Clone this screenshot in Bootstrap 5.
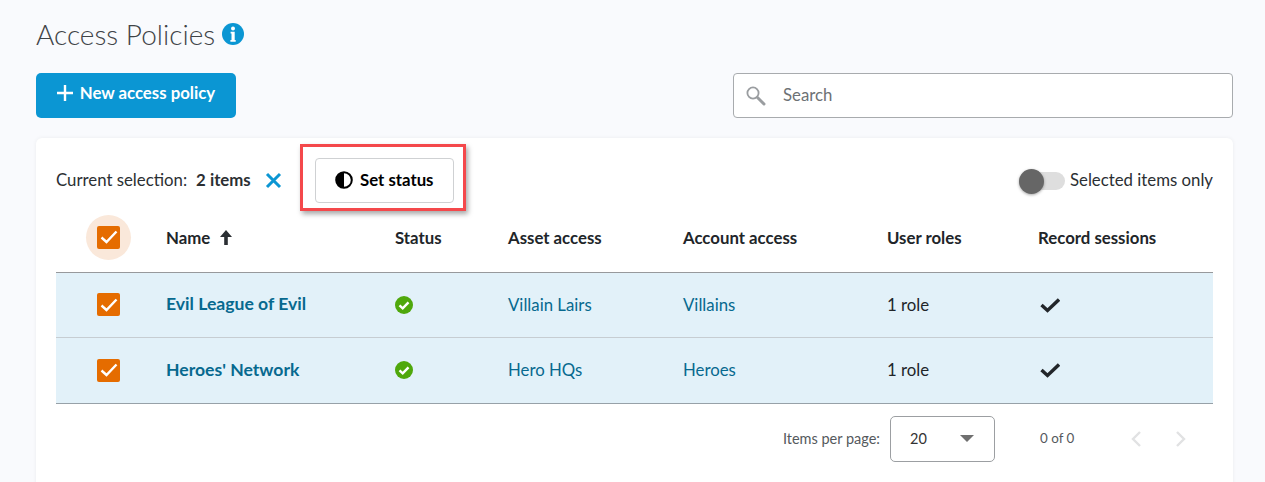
<!DOCTYPE html>
<html lang="en">
<head>
  <meta charset="UTF-8">
  <meta name="viewport" content="width=device-width, initial-scale=1">
  <title>Access Policies</title>
  <link href="https://cdn.jsdelivr.net/npm/bootstrap@5.3.0/dist/css/bootstrap.min.css" rel="stylesheet">
  <style>
    html, body { height: 482px; overflow: hidden; }
    body { background: #f9fafd; font-family: "Lato", "Liberation Sans", sans-serif; font-size: 16.8px; color: #2b2f33; padding: 0 32px 0 36px; }
    .page-title { font-size: 28px; font-weight: 300; color: #3f4347; line-height: 36px; margin: 0; padding-top: 16px; gap: 7px; }
    .title-row { height: 73px; }
    .new-btn { background: #0b96d3; color: #fff; border: 0; height: 45px; width: 200px; border-radius: 5px; font-weight: 700; font-size: 16.8px; padding: 0 0 6px; gap: 7px; }
    .new-btn:hover { background: #0b96d3; color: #fff; }
    .search-box { width: 500px; height: 45px; background: #fff; border: 1px solid #a8abae; border-radius: 4px; padding-left: 11px; gap: 16px; }
    .search-box input { border: 0; outline: 0; background: transparent; flex: 1; font-size: 16.8px; color: #333; padding: 0 0 2px; }
    .search-box input::placeholder { color: #6d7175; opacity: 1; }
    .panel-box { margin-top: 20px; background: #fff; border-radius: 6px; height: 400px; padding: 0 20px; box-shadow: 0 0 4px rgba(0,0,0,.06); }
    .sel-bar { height: 65px; padding-top: 20px; }
    .sel-label { padding-bottom: 2px; }
    .sel-count { margin-left: 9px; }
    .sel-clear { margin-left: 14px; }
    .status-wrap { margin-left: 33px; }
    .status-btn { width: 139px; height: 45px; background: #fff; border: 1px solid #cfd1d3; border-radius: 4px; font-weight: 700; color: #000; font-size: 16.8px; gap: 7px; padding: 0 0 2px; }
    .red-mark { position: absolute; left: -15px; top: -14px; width: 166px; height: 67px; border: 3px solid #f4484b; box-shadow: 2px 3px 5px rgba(0,0,0,.35); pointer-events: none; }
    .tog-row { gap: 5px; }
    .tog-track { display: block; position: relative; width: 46px; height: 18px; background: #dedede; border-radius: 9px; }
    .tog-knob { position: absolute; left: 0; top: -3px; width: 25px; height: 25px; border-radius: 50%; background: #666; box-shadow: 0 1px 3px rgba(0,0,0,.35); }
    .policy-table { table-layout: fixed; width: 1157px; margin: 0; }
    .policy-table th, .policy-table td { padding: 0; vertical-align: middle; border: 0; background: transparent; color: inherit; }
    .policy-table thead tr { height: 69px; }
    .policy-table thead th { font-weight: 700; border-bottom: 1px solid #97999c; }
    .policy-table tbody tr { height: 65px; }
    .policy-table tbody td { background: #e2f1f9; border-bottom: 1px solid #c6cdd2; }
    .policy-table tbody tr:last-child { height: 66px; }
    .policy-table tbody tr:last-child td { border-bottom-color: #97a1a8; }
    .w-a { width: 110px; } .w-b { width: 229px; } .w-c { width: 113px; } .w-d { width: 175px; } .w-e { width: 204px; } .w-f { width: 151px; }
    .cell-link { color: #07698f; text-decoration: none; }
    .name-link { color: #07698f; text-decoration: none; font-weight: 700; font-size: 17.6px; }
    .chk { width: 23px; height: 23px; background: #e56c00; border-radius: 2px; margin-left: 41px; }
    .halo { width: 45px; height: 45px; border-radius: 50%; background: #fae8da; margin-left: 30px; }
    .halo .chk { margin: 0; }
    .sort-arrow { margin-left: 5px; vertical-align: -1px; }
    .pager-row { height: 70px; font-size: 14.5px; color: #55595d; padding-right: 26px; }
    .page-select { width: 105px; height: 46px; border: 1px solid #9c9fa2; border-radius: 5px; padding: 0 20px 0 19px; margin-left: 10px; margin-right: 45px; color: #333; }
    .caret-down { width: 0; height: 0; border-left: 7px solid transparent; border-right: 7px solid transparent; border-top: 7px solid #6f6f6f; }
    .range-txt { width: 90px; font-size: 13.4px; }
    .next-arrow { margin-left: 33px; }
  </style>
</head>
<body>
  <!-- Title -->
  <div class="title-row">
    <h1 class="page-title d-flex align-items-center">Access Policies
      <svg width="22" height="22" viewBox="0 0 22 22"><circle cx="11" cy="11" r="11" fill="#0b96d3"/><circle cx="11" cy="5.400" r="2" fill="#fff"/><path d="M8.600 8.800h4.100v8.200h1v1.800H8.400V17h1.100v-6.400H8.600z" fill="#fff"/></svg>
    </h1>
  </div>

  <!-- Toolbar -->
  <div class="d-flex justify-content-between">
    <button class="btn new-btn d-flex align-items-center justify-content-center" type="button">
      <svg width="16" height="16" viewBox="0 0 16 16"><path d="M8 0v16M0 8h16" stroke="#fff" stroke-width="2.400"/></svg>
      New access policy
    </button>
    <div class="search-box d-flex align-items-center">
      <svg width="22" height="22" viewBox="0 0 22 22"><circle cx="8" cy="8" r="5.600" fill="none" stroke="#9a9da0" stroke-width="1.800"/><path d="M12.500 12.500l6.500 6.500" stroke="#9a9da0" stroke-width="3" stroke-linecap="round"/></svg>
      <input type="text" placeholder="Search">
    </div>
  </div>

  <!-- Policies -->
  <div class="panel-box">
    <div class="sel-bar d-flex align-items-center justify-content-between">
      <div class="d-flex align-items-center">
        <span class="sel-label">Current selection:</span>
        <strong class="sel-count sel-label">2 items</strong>
        <svg class="sel-clear" width="17" height="17" viewBox="0 0 17 17"><path d="M2 2l13 13M15 2L2 15" stroke="#0b96d3" stroke-width="3"/></svg>
        <div class="status-wrap position-relative">
          <button class="btn status-btn d-flex align-items-center justify-content-center" type="button">
            <svg width="18" height="18" viewBox="0 0 18 18"><circle cx="9" cy="9" r="7.800" fill="#fff" stroke="#000" stroke-width="2"/><path d="M9 1.500a7.500 7.500 0 0 0 0 15z" fill="#000"/></svg>
            Set status
          </button>
          <div class="red-mark"></div>
        </div>
      </div>
      <div class="tog-row d-flex align-items-center">
        <span class="tog-track"><span class="tog-knob"></span></span>
        <span class="sel-label">Selected items only</span>
      </div>
    </div>

    <table class="table policy-table">
      <thead>
        <tr>
          <th class="w-a"><div class="halo d-flex align-items-center justify-content-center"><div class="chk d-flex align-items-center justify-content-center"><svg width="18" height="14" viewBox="0 0 18 14"><path d="M1.500 7.500l5 4.500 10-10.500" fill="none" stroke="#fff" stroke-width="2.400"/></svg></div></div></th>
          <th class="w-b">Name <svg class="sort-arrow" width="14" height="15" viewBox="0 0 14 15"><path d="M7 0L1 7h4.200v8h3.600V7H13z" fill="#2b2f33"/></svg></th>
          <th class="w-c">Status</th>
          <th class="w-d">Asset access</th>
          <th class="w-e">Account access</th>
          <th class="w-f">User roles</th>
          <th>Record sessions</th>
        </tr>
      </thead>
      <tbody>
        <tr>
          <td><div class="chk d-flex align-items-center justify-content-center"><svg width="18" height="14" viewBox="0 0 18 14"><path d="M1.500 7.500l5 4.500 10-10.500" fill="none" stroke="#fff" stroke-width="2.400"/></svg></div></td>
          <td><a class="name-link" href="#">Evil League of Evil</a></td>
          <td><svg class="d-block" width="18" height="18" viewBox="0 0 18 18"><circle cx="9" cy="9" r="9" fill="#4fa80c"/><path d="M4.500 9.300l3.200 3 5.800-6" fill="none" stroke="#fff" stroke-width="2.400"/></svg></td>
          <td><a class="cell-link" href="#">Villain Lairs</a></td>
          <td><a class="cell-link" href="#">Villains</a></td>
          <td>1 role</td>
          <td><svg class="d-block" width="22" height="16" viewBox="0 0 22 16"><path d="M3.500 8l6 5.500L21 2.500" fill="none" stroke="#22262a" stroke-width="3.400"/></svg></td>
        </tr>
        <tr>
          <td><div class="chk d-flex align-items-center justify-content-center"><svg width="18" height="14" viewBox="0 0 18 14"><path d="M1.500 7.500l5 4.500 10-10.500" fill="none" stroke="#fff" stroke-width="2.400"/></svg></div></td>
          <td><a class="name-link" href="#">Heroes' Network</a></td>
          <td><svg class="d-block" width="18" height="18" viewBox="0 0 18 18"><circle cx="9" cy="9" r="9" fill="#4fa80c"/><path d="M4.500 9.300l3.200 3 5.800-6" fill="none" stroke="#fff" stroke-width="2.400"/></svg></td>
          <td><a class="cell-link" href="#">Hero HQs</a></td>
          <td><a class="cell-link" href="#">Heroes</a></td>
          <td>1 role</td>
          <td><svg class="d-block" width="22" height="16" viewBox="0 0 22 16"><path d="M3.500 8l6 5.500L21 2.500" fill="none" stroke="#22262a" stroke-width="3.400"/></svg></td>
        </tr>
      </tbody>
    </table>

    <div class="pager-row d-flex align-items-center justify-content-end">
      <span>Items per page:</span>
      <div class="page-select d-flex align-items-center justify-content-between"><span>20</span><span class="caret-down"></span></div>
      <span class="range-txt">0 of 0</span>
      <svg width="12" height="18" viewBox="0 0 12 18"><path d="M10 2L3 9l7 7" fill="none" stroke="#e1e2e3" stroke-width="2.400"/></svg>
      <svg class="next-arrow" width="12" height="18" viewBox="0 0 12 18"><path d="M2 2l7 7-7 7" fill="none" stroke="#e1e2e3" stroke-width="2.400"/></svg>
    </div>
  </div>

  <script src="https://cdn.jsdelivr.net/npm/bootstrap@5.3.0/dist/js/bootstrap.bundle.min.js"></script>
</body>
</html>
